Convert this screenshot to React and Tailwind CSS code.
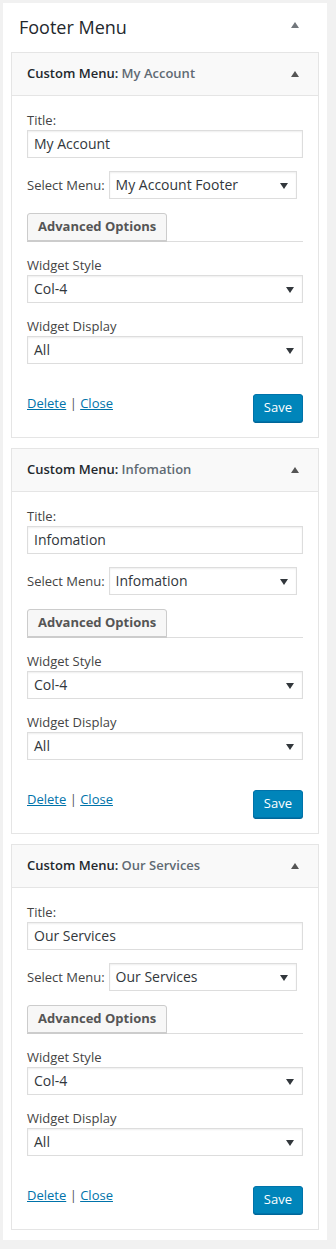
import React from "react";

const widgets = [
    {name: "My Account", menu: "My Account Footer"},
    {name: "Infomation", menu: "Infomation"},
    {name: "Our Services", menu: "Our Services"},
];

function Caret({className}) {
    return (
        <svg className={className} width="8" height="6" viewBox="0 0 8 6">
            <path d="M0 6 L4 0 L8 6 Z" fill="currentColor"/>
        </svg>
    );
}

function DownArrow() {
    return (
        <svg className="absolute right-[8px] top-[11px] text-[#32373c]" width="8" height="6" viewBox="0 0 8 6">
            <path d="M0 0 L8 0 L4 6 Z" fill="currentColor"/>
        </svg>
    );
}

function FakeSelect({value, className}) {
    return (
        <div className={"relative h-[28px] border border-[#ddd] bg-white shadow-[inset_0_1px_2px_rgba(0,0,0,0.07)] pl-[6px] text-[14px] leading-[26px] text-[#32373c] " + className}>
            {value}
            <DownArrow/>
        </div>
    );
}

function WidgetCard({widget}) {
    return (
        <div className="border border-[#e5e5e5] bg-white">
            <div className="h-[43px] bg-[#f9f9f9] border-b border-[#e5e5e5] flex items-center justify-between pl-[15px] pr-[19px]">
                <h3 className="text-[13px] font-semibold text-[#23282d]">
                    Custom Menu: <span className="text-[#606a73]">{widget.name}</span>
                </h3>
                <Caret className="text-[#555]"/>
            </div>
            <div className="px-[15px] pt-[15px] pb-[15px] text-[13px] text-[#444]">
                <div className="leading-[18px] mb-[1px]">Title:</div>
                <div className="h-[28px] border border-[#ddd] shadow-[inset_0_1px_2px_rgba(0,0,0,0.07)] pl-[6px] text-[14px] leading-[26px] text-[#32373c]">
                    {widget.name}
                </div>
                <div className="flex items-center mt-[13px]">
                    <span className="leading-[18px]">Select Menu:</span>
                    <FakeSelect value={widget.menu} className="ml-[4px] w-[188px]"/>
                </div>
                <div className="mt-[14px] border-b border-[#ddd]">
                    <button className="h-[28px] px-[10px] bg-[#f7f7f7] border border-[#ccc] rounded-t-[3px] shadow-[0_1px_0_#ccc] text-[13px] font-bold text-[#555]">
                        Advanced Options
                    </button>
                </div>
                <div className="leading-[18px] mt-[14px] mb-[1px]">Widget Style</div>
                <FakeSelect value="Col-4" className="w-full"/>
                <div className="leading-[18px] mt-[14px] mb-[1px]">Widget Display</div>
                <FakeSelect value="All" className="w-full"/>
                <div className="flex justify-between items-start mt-[30px]">
                    <div className="leading-[18px] text-[#0073aa]">
                        <a href="#" className="underline">Delete</a>
                        <span className="text-[#555]"> | </span>
                        <a href="#" className="underline">Close</a>
                    </div>
                    <button className="h-[28px] px-[10px] rounded-[3px] bg-[#0085ba] border border-[#0073aa] shadow-[0_1px_0_#006799] text-white text-[13px]">
                        Save
                    </button>
                </div>
            </div>
        </div>
    );
}

export default function App() {
    return (
        <div className="min-h-[1249px] bg-[#f1f1f1] pt-[3px] pl-[3px] pr-[9px] pb-[9px]" style={{fontFamily: '"Open Sans", "Liberation Sans", sans-serif'}}>
            <div className="bg-white w-[324px] px-[8px] pb-[10px]">
                <div className="h-[49px] flex items-center justify-between pl-[8px] pr-[20px]">
                    <h2 className="text-[18px] text-[#23282d]">Footer Menu</h2>
                    <Caret className="text-[#72777c] -mt-[6px]"/>
                </div>
                <div className="flex flex-col gap-[10px]">
                    {widgets.map((w) => (
                        <WidgetCard key={w.name} widget={w}/>
                    ))}
                </div>
            </div>
        </div>
    );
}
